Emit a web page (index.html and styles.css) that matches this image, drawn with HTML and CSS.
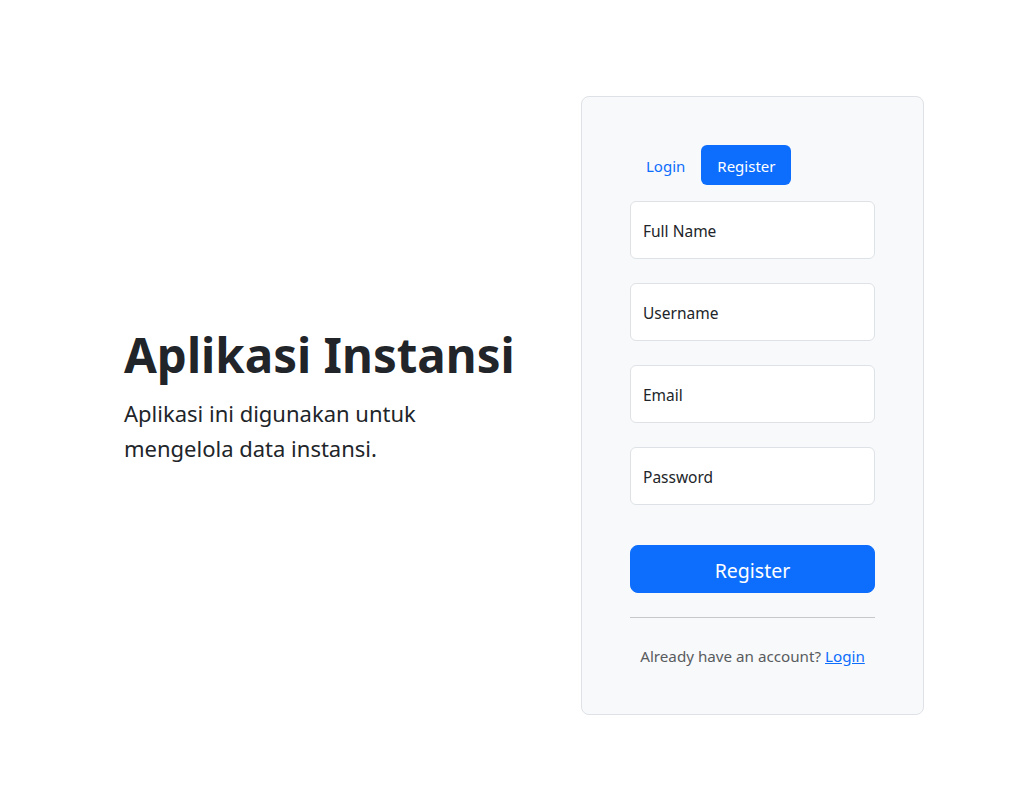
FILE: index.html
```html
<!DOCTYPE html>
<html lang="id">
<head>
<meta charset="utf-8">
<title>Aplikasi Instansi</title>
<link rel="stylesheet" href="styles.css">
</head>
<body>
<main class="page">
  <section class="intro">
    <h1 class="title">Aplikasi Instansi</h1>
    <p class="lead">Aplikasi ini digunakan untuk mengelola data instansi.</p>
  </section>
  <form class="card">
    <nav class="tabs">
      <a class="tab" href="#">Login</a>
      <a class="tab active" href="#">Register</a>
    </nav>
    <div class="fields">
      <label class="field">Full Name</label>
      <label class="field">Username</label>
      <label class="field">Email</label>
      <label class="field">Password</label>
    </div>
    <button class="submit" type="button">Register</button>
    <hr class="divider">
    <p class="foot">Already have an account? <a href="#">Login</a></p>
  </form>
</main>
</body>
</html>
```
FILE: styles.css
```css
* { box-sizing: border-box; }
html, body { margin: 0; padding: 0; }
body {
  font-family: "Noto Sans", "Open Sans", sans-serif;
  color: #212529;
  background: #fff;
  font-size: 16px;
  line-height: 1.5;
}
.page {
  display: flex;
  align-items: center;
  min-height: 100vh;
  padding: 0 100px 0 124px;
}
.intro {
  flex: 1;
  padding-bottom: 19px;
}
.title {
  margin: 0 0 13px;
  font-size: 47.5px;
  font-weight: 700;
  line-height: 57px;
}
.lead {
  margin: 0;
  font-size: 22px;
  line-height: 35px;
  max-width: 330px;
}
.card {
  width: 343px;
  flex: none;
  padding: 48px 48px 46px;
  background: #f8f9fa;
  border: 1px solid #dee2e6;
  border-radius: 8px;
}
.tabs {
  display: flex;
  margin-bottom: 16px;
}
.tab {
  display: block;
  padding: 9px 16px 7px;
  line-height: 24px;
  font-size: 15px;
  color: #0d6efd;
  text-decoration: none;
  border-radius: 6px;
}
.tab.active {
  background: #0d6efd;
  color: #fff;
}
.fields {
  display: flex;
  flex-direction: column;
  gap: 24px;
}
.field {
  display: block;
  height: 58px;
  padding: 17px 12px 15px;
  line-height: 24px;
  font-size: 15.5px;
  background: #fff;
  border: 1px solid #dee2e6;
  border-radius: 6px;
  color: #212529;
}
.submit {
  display: block;
  width: 100%;
  margin-top: 40px;
  height: 48px;
  padding: 10px 16px 6px;
  font-family: inherit;
  font-size: 19.5px;
  line-height: 30px;
  color: #fff;
  background: #0d6efd;
  border: 1px solid #0d6efd;
  border-radius: 8px;
}
.divider {
  margin: 24px 0 26px;
  border: 0;
  border-top: 1px solid #c7c8c9;
}
.foot {
  margin: 0;
  text-align: center;
  font-size: 15.2px;
  line-height: 24px;
  color: #595c5f;
}
.foot a { color: #0d6efd; text-decoration: underline; }
```
